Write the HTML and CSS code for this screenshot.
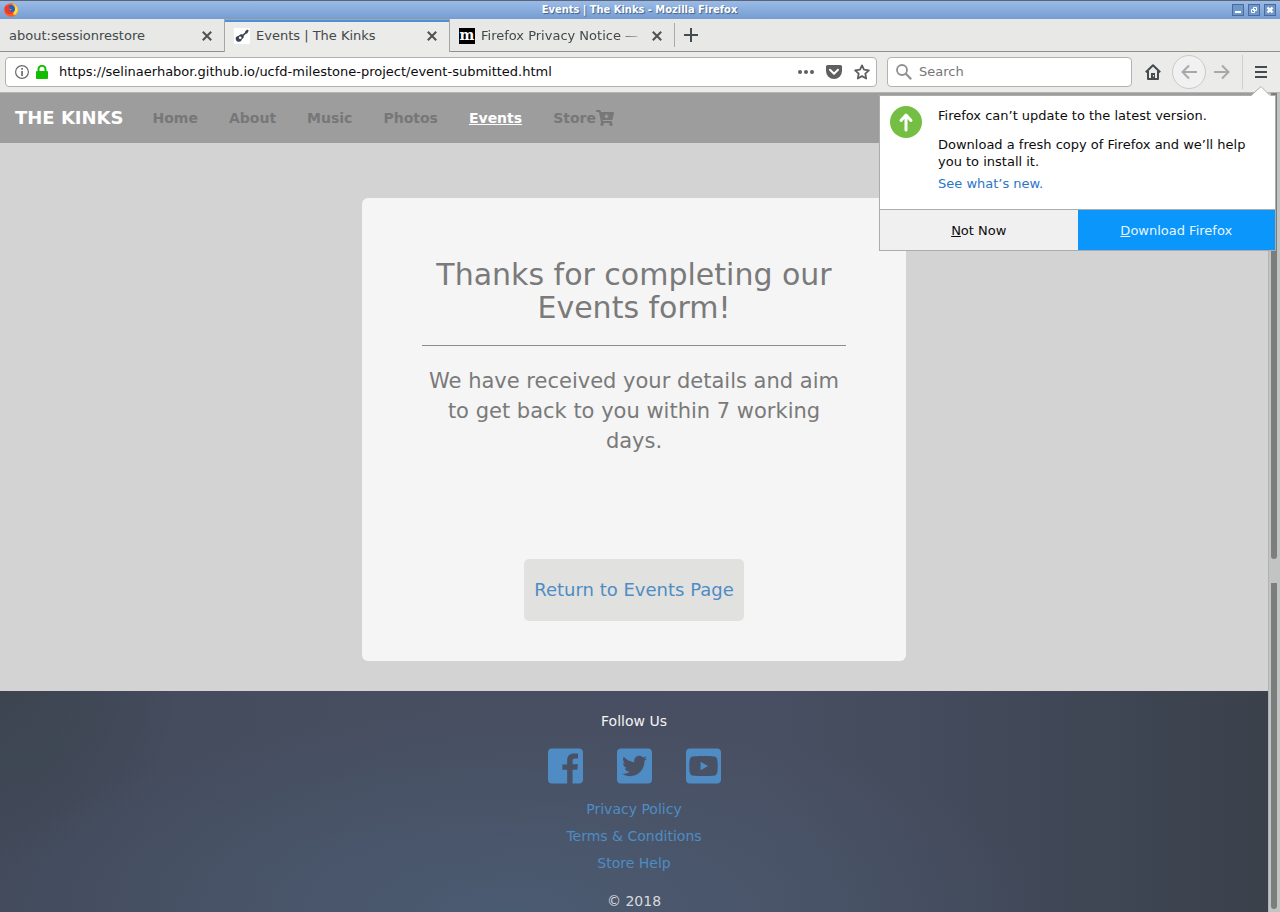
FILE: index.html
```html
<!DOCTYPE html>
<html lang="en">
<head>
<meta charset="utf-8">
<title>Events | The Kinks - Mozilla Firefox</title>
<link rel="stylesheet" href="styles.css">
</head>
<body>
<header class="browser">
  <div class="titlebar">
    <svg class="fox" viewBox="0 0 14 14" aria-hidden="true">
      <circle cx="7" cy="7" r="6.8" fill="#ff5a1f"/>
      <path d="M8 0.3a6.8 6.8 0 0 1 4 11.6L9 12l2-5z" fill="#ffb61f"/>
      <path d="M11.500 2l1.800 3.200.3 3-2.600 3-2-1 2-3z" fill="#ffe04a"/>
      <circle cx="7" cy="5.800" r="3.900" fill="#1d63c4"/>
      <path d="M.6 4.500L2.200 2l1.600 1.500 2.200.2-.9 1.600 1.800.8L5 7.200c1 1.800 3 1.800 4.600.8-.6 2.600-3.600 4-6 2.800S.2 7 .6 4.500z" fill="#f0392b"/>
      <path d="M5.500 6.500L8 6l-2 1.500z" fill="#ffb61f"/>
    </svg>
    <div class="window-title">Events | The Kinks - Mozilla Firefox</div>
    <div class="window-buttons">
      <button class="wbtn" aria-label="Minimize"><svg viewBox="0 0 12 12"><path d="M3 7h6v2H3z" fill="#fff"/></svg></button>
      <button class="wbtn" aria-label="Restore"><svg viewBox="0 0 12 12"><path d="M5.500 3.500h3v3h-3zM3.500 5.500h3v3h-3z" fill="none" stroke="#fff"/></svg></button>
      <button class="wbtn" aria-label="Close window"><svg viewBox="0 0 12 12"><path d="M3.500 3.500l5 5m0-5l-5 5" stroke="#fff" stroke-width="2.400"/></svg></button>
    </div>
  </div>
  <div class="tabs">
    <div class="tab">
      <span class="tab-label">about:sessionrestore</span>
      <button class="close" aria-label="Close tab"><svg viewBox="0 0 10 10"><path d="M.8.8l8.400 8.400M9.200.8L.8 9.200"/></svg></button>
    </div>
    <div class="tab active">
      <svg class="favicon" viewBox="0 0 16 16" aria-hidden="true"><path d="M0 0h16v16H0z" fill="#fff"/><path d="M14.800 2.600l-1.600-1-2 1.600-.2 1.400-2.400 2C7.400 5.800 6 6.200 5.400 7.200 4.600 8 3 7.800 2 9.200c-1 1.600.2 4.400 2.600 4.600 2.200.2 3-1.400 3.400-2.800 1.400-.4 2.200-1.600 1.600-3L11.800 5.800l1.400-.2z" fill="#3c4452"/><circle cx="6.200" cy="9.800" r="1.300" fill="#fff"/></svg>
      <span class="tab-label">Events | The Kinks</span>
      <button class="close" aria-label="Close tab"><svg viewBox="0 0 10 10"><path d="M.8.8l8.400 8.400M9.200.8L.8 9.200"/></svg></button>
    </div>
    <div class="tab">
      <span class="favicon moz">m</span>
      <span class="tab-label fade">Firefox Privacy Notice —</span>
      <button class="close" aria-label="Close tab"><svg viewBox="0 0 10 10"><path d="M.8.8l8.400 8.400M9.200.8L.8 9.200"/></svg></button>
    </div>
    <div class="tab-rest">
      <button class="new-tab" aria-label="New tab"><svg viewBox="0 0 14 14"><path d="M7 0v14M0 7h14"/></svg></button>
    </div>
  </div>
  <div class="toolbar">
    <div class="field url">
      <svg class="i14" viewBox="0 0 14 14" aria-hidden="true"><circle cx="7" cy="7" r="6.400" fill="none" stroke="#6b6b6b" stroke-width="1.200"/><path d="M6.200 3h1.700v1.700H6.200zM6.200 6h1.700v5H6.200z" fill="#6b6b6b"/></svg>
      <svg class="lock" viewBox="0 0 12 14" aria-hidden="true"><path d="M2.500 6.500V4.300a3.500 3.500 0 0 1 7 0v2.200" fill="none" stroke="#12bc00" stroke-width="2"/><rect y="6" width="12" height="8" rx="1" fill="#12bc00"/></svg>
      <input class="text" type="text" aria-label="Address" value="https://selinaerhabor.github.io/ucfd-milestone-project/event-submitted.html">
      <div class="url-actions">
        <button aria-label="Page actions"><svg class="i16" viewBox="0 0 16 16"><g fill="#5f5f5f"><circle cx="2" cy="8" r="2"/><circle cx="8" cy="8" r="2"/><circle cx="14" cy="8" r="2"/></g></svg></button>
        <button aria-label="Save to Pocket"><svg class="i16" viewBox="0 0 16 16"><path d="M1.600 1h12.800A1.600 1.600 0 0 1 16 2.600V7a8 8 0 0 1-16 0V2.600A1.600 1.600 0 0 1 1.600 1z" fill="#5f5f5f"/><path d="M4 5.800l4 3.900 4-3.900" fill="none" stroke="#fff" stroke-width="2" stroke-linecap="round" stroke-linejoin="round"/></svg></button>
        <button aria-label="Bookmark"><svg class="i16" viewBox="0 0 16 16"><path d="M8 1.400l2 4.300 4.900.6-3.600 3.300.9 4.900L8 12.100l-4.200 2.400.9-4.900L1.100 6.300 6 5.700z" fill="none" stroke="#5f5f5f" stroke-width="1.800" stroke-linejoin="round"/></svg></button>
      </div>
    </div>
    <div class="field search">
      <svg class="i16" viewBox="0 0 16 16" aria-hidden="true"><circle cx="6" cy="6" r="5" fill="none" stroke="#8f8f8f" stroke-width="1.800"/><path d="M9.800 9.800L15.200 15.200" stroke="#8f8f8f" stroke-width="2.200"/></svg>
      <input class="text" type="text" aria-label="Search" placeholder="Search">
    </div>
    <div class="nav-buttons">
      <button aria-label="Home"><svg class="i16" viewBox="0 0 16 16"><path d="M.8 8.300L8 1.200l7.200 7.100M3 7v8h10V7" fill="none" stroke="#454c4e" stroke-width="2" stroke-linejoin="round"/><path d="M6 9h4v6H6z" fill="#454c4e"/><path d="M8 11h1v1.500H8z" fill="#eee"/></svg></button>
      <button class="back" aria-label="Back"><svg class="i16" viewBox="0 0 16 16"><path d="M16 8H2M8 1.500L1.500 8 8 14.500" fill="none" stroke="#a7a9a8" stroke-width="2"/></svg></button>
      <button aria-label="Forward"><svg class="i16" viewBox="0 0 16 16"><path d="M0 8h14M8 1.500L14.500 8 8 14.500" fill="none" stroke="#a7a9a8" stroke-width="2"/></svg></button>
    </div>
    <button class="menu" aria-label="Open menu"><svg viewBox="0 0 12 12"><path d="M0 1h12M0 6h12M0 11h12" stroke="#454c4e" stroke-width="2"/></svg></button>
  </div>
</header>

<div class="viewport">
  <div class="page">
    <nav class="site-nav">
      <a class="brand" href="#">THE KINKS</a>
      <a href="#">Home</a>
      <a href="#">About</a>
      <a href="#">Music</a>
      <a href="#">Photos</a>
      <a class="current" href="#">Events</a>
      <a href="#">Store<svg class="cart" viewBox="0 0 576 512" aria-hidden="true"><path fill-rule="evenodd" d="M504.717 320H211.572l6.545 32h268.418c15.401 0 26.816 14.301 23.403 29.319l-5.517 24.276C523.112 414.668 536 433.828 536 456c0 31.202-25.519 56.444-56.824 55.994-29.823-.429-54.350-24.631-55.155-54.447-.44-16.287 6.085-31.049 16.803-41.548H231.176C241.553 426.165 248 440.326 248 456c0 31.813-26.528 57.431-58.670 55.938-28.540-1.325-51.751-24.385-53.251-52.917-1.158-22.034 10.436-41.455 28.051-51.586L93.883 64H24C10.745 64 0 53.255 0 40V24C0 10.745 10.745 0 24 0h102.529c11.401 0 21.228 8.021 23.513 19.190L159.208 64H551.990c15.401 0 26.816 14.301 23.403 29.319l-47.273 208C525.637 312.246 515.923 320 504.717 320zM400 184h-42v-46c0-9-5-14-12-14h-20c-7 0-12 5-12 14v46h-42c-9 0-11 9-6 14l60 62c6 6 14 6 20 0l60-62c5-5 3-14-6-14z"/></svg></a>
    </nav>
    <main class="main">
      <section class="card">
        <h1>Thanks for completing our Events form!</h1>
        <hr>
        <p>We have received your details and aim to get back to you within 7 working days.</p>
        <a class="return" href="#">Return to Events Page</a>
      </section>
    </main>
    <footer class="footer">
      <div>Follow Us</div>
      <div class="social">
        <a href="#" aria-label="Facebook"><svg viewBox="0 32 448 448"><path d="M448 80v352c0 26.500-21.500 48-48 48h-85.300V302.800h60.600l8.700-67.600h-69.300V192c0-19.600 5.400-32.900 33.500-32.900H384V98.700c-6.200-.8-27.400-2.700-52.200-2.700-51.600 0-87 31.500-87 89.400v49.900H184v67.600h60.900V480H48c-26.500 0-48-21.500-48-48V80c0-26.500 21.500-48 48-48h352c26.500 0 48 21.500 48 48z"/></svg></a>
        <a href="#" aria-label="Twitter"><svg viewBox="0 32 448 448"><path d="M400 32H48C21.500 32 0 53.500 0 80v352c0 26.500 21.500 48 48 48h352c26.500 0 48-21.500 48-48V80c0-26.500-21.500-48-48-48zm-48.900 158.800c.2 2.800.2 5.700.2 8.500 0 86.700-66 186.600-186.600 186.600-37.200 0-71.700-10.800-100.700-29.400 5.300.6 10.400.8 15.800.8 30.700 0 58.900-10.400 81.400-28-28.800-.6-53-19.500-61.300-45.500 10.100 1.500 19.200 1.500 29.600-1.200-30-6.100-52.500-32.500-52.500-64.400v-.8c8.700 4.900 18.900 7.900 29.600 8.300a65.447 65.447 0 0 1-29.200-54.600c0-12.200 3.200-23.400 8.900-33.100 32.300 39.800 80.800 65.800 135.200 68.600-9.300-44.500 24-80.600 64-80.600 18.900 0 35.900 7.900 47.900 20.700 14.800-2.800 29-8.300 41.600-15.800-4.900 15.200-15.200 28-28.800 36.100 13.200-1.400 26-5.100 37.800-10.200-8.900 13.100-20.100 24.700-32.900 34z"/></svg></a>
        <a href="#" aria-label="YouTube"><svg viewBox="0 32 448 448"><path d="M186.800 202.100l95.200 54.100-95.200 54.100V202.100zM448 80v352c0 26.500-21.500 48-48 48H48c-26.500 0-48-21.500-48-48V80c0-26.500 21.500-48 48-48h352c26.500 0 48 21.500 48 48zm-42 176.300s0-59.600-7.600-88.200c-4.200-15.800-16.500-28.200-32.200-32.400C337.900 128 224 128 224 128s-113.900 0-142.200 7.700c-15.700 4.200-28 16.600-32.200 32.400-7.600 28.500-7.600 88.200-7.600 88.200s0 59.600 7.600 88.200c4.200 15.800 16.500 27.700 32.200 31.900C110.100 384 224 384 224 384s113.900 0 142.200-7.700c15.700-4.200 28-16.100 32.200-31.900 7.600-28.500 7.600-88.100 7.600-88.100z"/></svg></a>
      </div>
      <div class="links">
        <a href="#">Privacy Policy</a>
        <a href="#">Terms &amp; Conditions</a>
        <a href="#">Store Help</a>
      </div>
      <div class="copyright">© 2018</div>
    </footer>
  </div>
  <div class="scrollbar" aria-hidden="true"><span class="thumb upper"></span><span class="thumb lower"></span></div>
</div>

<aside class="popup" role="dialog" aria-label="Firefox update">
  <svg class="arrow" viewBox="0 0 20 10" aria-hidden="true"><path d="M0 10L10 0l10 10z" fill="#fff"/><path d="M0 9.500L10 .5l9 9" fill="none" stroke="#aaa"/></svg>
  <div class="popup-body">
    <svg class="update" viewBox="0 0 32 32" aria-hidden="true"><circle cx="16" cy="16" r="16" fill="#74bf43"/><path d="M16 24V9.500M11 14.500l5-5.500 5 5.500" fill="none" stroke="#fff" stroke-width="3" stroke-linecap="round" stroke-linejoin="round"/></svg>
    <div class="popup-text">
      <div>Firefox can’t update to the latest version.</div>
      <div class="detail">Download a fresh copy of Firefox and we’ll help you to install it.</div>
      <a href="#">See what’s new.</a>
    </div>
  </div>
  <div class="popup-actions">
    <button><span><u>N</u>ot Now</span></button>
    <button class="primary"><span><u>D</u>ownload Firefox</span></button>
  </div>
</aside>
</body>
</html>
```
FILE: styles.css
```css
* { box-sizing: border-box; }
body {
  margin: 0;
  height: 100vh;
  overflow: hidden;
  display: flex;
  flex-direction: column;
  position: relative;
  font-family: "DejaVu Sans", sans-serif;
  font-size: 14px;
  line-height: 20px;
}
a { text-decoration: none; }
svg { display: block; flex: none; }
button { border: 0; padding: 0; background: none; font: inherit; color: inherit; display: flex; align-items: center; justify-content: center; }

/* Browser chrome */
.browser, .popup { font-size: 13px; }
.titlebar {
  height: 19px;
  display: flex;
  align-items: center;
  padding: 0 4px;
  border-top: 1px solid #5b6470;
  background: linear-gradient(#9abbe8, #759dd0);
}
.fox { width: 14px; height: 14px; }
.window-title { flex: 1; text-align: center; padding-left: 29px; color: #fff; font: bold 11px/18px "DejaVu Sans Condensed", "DejaVu Sans", sans-serif; text-shadow: 1px 1px 1px #3f5f8c; }
.window-buttons { display: flex; gap: 4px; }
.wbtn { width: 12px; height: 12px; background: #6f97cc; outline: 1px solid #486b9b; outline-offset: -1px; }
.wbtn svg { width: 12px; height: 12px; }

.tabs { display: flex; height: 33px; background: #e8e8e6; color: #42484a; }
.tab { width: 225px; display: flex; align-items: center; gap: 6px; padding: 1px 13px 0 9px; border-bottom: 1px solid #8f9190; }
.tab.active { width: 226px; margin-left: -1px; padding: 0 12px 0 9px; background: #ebebe9; border: 1px solid #a5a5a3; border-width: 0 1px; box-shadow: inset 0 1px #a5a5a3, inset 0 3px #4a90d9; }
.tab-label { flex: 1; min-width: 0; white-space: nowrap; }
.fade { -webkit-mask-image: linear-gradient(90deg, #000 85%, transparent); mask-image: linear-gradient(90deg, #000 85%, transparent); }
.favicon { width: 16px; height: 16px; }
.moz { background: #000; color: #fff; font: bold 14px/14px "DejaVu Serif", serif; text-align: center; }
.close svg { width: 10px; height: 10px; }
.close path { stroke: #4c5254; stroke-width: 2; }
.tab-rest { flex: 1; display: flex; align-items: center; border-bottom: 1px solid #8f9190; margin-left: -1px; }
.new-tab { height: 24px; padding-left: 9px; border-left: 1px solid #aaa; }
.new-tab svg { width: 14px; height: 14px; }
.new-tab path { stroke: #454c4e; stroke-width: 2; }

.toolbar { height: 41px; display: flex; align-items: center; padding: 0 13px 0 5px; background: #ebebe9; border-bottom: 1px solid #b4b4b2; }
.field { height: 30px; display: flex; align-items: center; background: #fff; border: 1px solid #b2b2b0; border-radius: 4px; }
.url { flex: 1; padding: 0 6px 0 9px; }
.search { width: 245px; margin-left: 10px; padding: 0 8px; }
.text { flex: 1; min-width: 0; border: 0; padding: 0; outline: 0; background: none; font: inherit; color: #0c0c0d; }
.url .text { margin-left: 11px; }
.search .text { margin-left: 7px; }
.text::placeholder { color: #767676; opacity: 1; }
.i14 { width: 14px; height: 14px; }
.i16 { width: 16px; height: 16px; }
.lock { width: 12px; height: 14px; margin-left: 7px; }
.url-actions { display: flex; gap: 12px; }
.nav-buttons { display: flex; align-items: center; gap: 8px; margin-left: 13px; }
.back { width: 34px; height: 34px; border: 1px solid #cacaca; border-radius: 50%; background: #f1f1f1; margin-left: 3px; }
.menu { height: 34px; margin-left: 12px; padding-left: 12px; border-left: 1px solid #cfcfcd; }
.menu svg { width: 12px; height: 12px; }

/* Web page */
.viewport { flex: 1; min-height: 0; display: flex; }
.page { flex: 1; min-width: 0; display: flex; flex-direction: column; background: #d3d3d3; }
.site-nav { display: flex; align-items: center; gap: 1px; height: 50px; background: #9d9d9d; }
.site-nav a { display: flex; align-items: center; padding: 0 15px; font-weight: bold; color: #777; }
.site-nav .brand { padding-right: 13px; font-size: 18px; color: #fff; }
.site-nav .current { color: #fff; text-decoration: underline; }
.cart { width: 18px; height: 16px; fill: #777; }

.main { padding: 55px 20px 30px; display: flex; justify-content: center; }
.card { width: 100%; max-width: 544px; padding: 60px 60px 40px; display: flex; flex-direction: column; align-items: center; text-align: center; color: #7a7a7a; background: #f5f5f5; border-radius: 6px; }
.card h1 { margin: 0; font-size: 30px; line-height: 33px; font-weight: normal; }
.card hr { width: 100%; margin: 21px 0 20px; border: 0; border-top: 1px solid #8c8c8c; }
.card p { margin: 0; font-size: 21px; line-height: 30px; }
.return { margin-top: 103px; padding: 21px 10px; font-size: 18px; color: #4f8cc4; background: #e1e1df; border-radius: 5px; }

.footer {
  flex: 1;
  display: flex;
  flex-direction: column;
  align-items: center;
  padding-top: 20px;
  color: #f5f5f5;
  background:
    radial-gradient(ellipse 42% 90% at 40% 100%, rgba(75, 92, 115, .9), transparent),
    radial-gradient(ellipse 14% 80% at 0% 0%, rgba(59, 68, 78, .9), transparent),
    linear-gradient(90deg, #424a5b, #474e60 30%, #494f62 60%, #414959 80%, #3a414b);
}
.social { display: flex; gap: 34px; margin-top: 17px; }
.social svg { width: 35px; height: 36px; fill: #4f8cc4; }
.links { display: flex; flex-direction: column; align-items: center; gap: 7px; margin-top: 15px; }
.links a { color: #4f8cc4; }
.copyright { margin-top: 18px; color: #d8dadd; }

.scrollbar { width: 12px; display: flex; flex-direction: column; align-items: flex-start; padding: 0 0 3px 2px; gap: 24px; background: #c2c4c3; border-left: 1px solid #b1b3b2; }
.thumb { width: 6px; background: #7a7f7e; }
.upper { flex: 465; border-radius: 0 0 3px 3px; }
.lower { flex: 326; border-radius: 0 0 3px 3px; }

/* Update notification */
.popup { position: absolute; top: 95px; right: 4px; width: 397px; border: 1px solid #acacac; background: #fff; color: #0c0c0d; line-height: 17px; }
.arrow { position: absolute; right: 4px; top: -10px; width: 20px; height: 10px; }
.popup-body { display: flex; gap: 16px; padding: 10px 20px 17px 10px; }
.update { width: 32px; height: 32px; }
.popup-text { display: flex; flex-direction: column; padding-top: 1px; }
.detail { margin: 12px 0 5px; }
.popup-text a { color: #2a76c9; }
.popup-actions { display: flex; height: 41px; border-top: 1px solid #acacac; }
.popup-actions button { flex: 1; background: #f0f0f0; }
.popup-actions .primary { background: #0a96fb; color: #e8f5ff; }
```
